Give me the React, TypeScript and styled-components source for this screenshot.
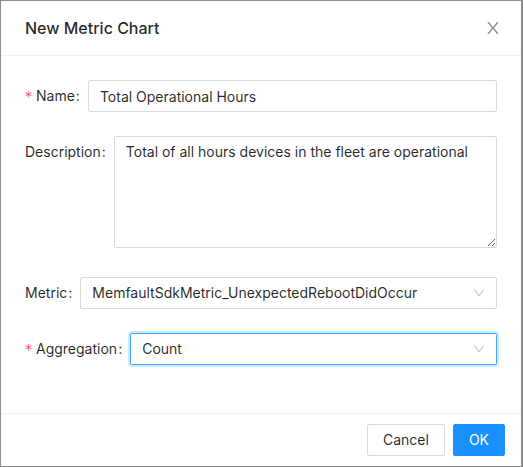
import React from 'react';
import styled, { createGlobalStyle } from 'styled-components';

const GlobalStyle = createGlobalStyle`
  html, body {
    margin: 0;
    padding: 0;
    background: #8c8c8c;
    font-family: Inter, "Noto Sans", "Liberation Sans", sans-serif;
    font-size: 14px;
    color: rgba(0, 0, 0, 0.85);
  }
  * { box-sizing: border-box; }
`;

const Modal = styled.div`
  width: 520px;
  margin: 1px 0 0 1px;
  background: #fff;
  display: flex;
  flex-direction: column;
`;

const Header = styled.div`
  display: flex;
  align-items: center;
  justify-content: space-between;
  padding: 16px 20px 16px 24px;
  border-bottom: 1px solid #f0f0f0;
`;

const Title = styled.div`
  font-size: 16px;
  line-height: 22px;
  font-weight: 500;
  color: rgba(0, 0, 0, 0.85);
`;

const CloseButton = styled.button`
  border: 0;
  background: none;
  padding: 0;
  width: 16px;
  height: 16px;
  display: flex;
  color: rgba(0, 0, 0, 0.45);
  cursor: pointer;
`;

const Body = styled.div`
  padding: 24px;
  display: flex;
  flex-direction: column;
`;

const Row = styled.div<{ $gap?: number }>`
  display: flex;
  align-items: flex-start;
  margin-bottom: ${(p) => p.$gap ?? 24}px;
`;

const Label = styled.label<{ $required?: boolean }>`
  display: flex;
  align-items: center;
  height: 32px;
  line-height: 32px;
  white-space: nowrap;
  color: rgba(0, 0, 0, 0.85);

  &::before {
    content: ${(p) => (p.$required ? '"*"' : 'none')};
    color: #ff4d4f;
    margin-right: 4px;
    font-family: "DejaVu Sans", sans-serif;
    font-size: 14px;
  }

  &::after {
    content: ':';
    margin: 0 8px 0 1px;
  }
`;

const Input = styled.input`
  flex: 1;
  height: 32px;
  padding: 4px 11px;
  border: 1px solid #d9d9d9;
  border-radius: 2px;
  font: inherit;
  color: rgba(0, 0, 0, 0.85);
  outline: none;
`;

const TextArea = styled.textarea`
  flex: 1;
  height: 112px;
  padding: 4px 11px;
  border: 1px solid #d9d9d9;
  border-radius: 2px;
  font: inherit;
  line-height: 22px;
  color: rgba(0, 0, 0, 0.85);
  outline: none;
  resize: vertical;
`;

const Select = styled.div<{ $focused?: boolean }>`
  flex: 1;
  height: 32px;
  padding: 0 11px;
  display: flex;
  align-items: center;
  justify-content: space-between;
  border: 1px solid ${(p) => (p.$focused ? '#40a9ff' : '#d9d9d9')};
  border-radius: 2px;
  box-shadow: ${(p) => (p.$focused ? '0 0 0 2px rgba(24, 144, 255, 0.2)' : 'none')};
  line-height: 30px;
`;

const Arrow = styled.span`
  display: flex;
  width: 12px;
  height: 12px;
  color: rgba(0, 0, 0, 0.25);
`;

const Footer = styled.div`
  display: flex;
  justify-content: flex-end;
  gap: 8px;
  padding: 10px 16px;
  border-top: 1px solid #f0f0f0;
`;

const Button = styled.button<{ $primary?: boolean }>`
  height: 32px;
  padding: 4px 15px;
  font: inherit;
  line-height: 22px;
  border-radius: 2px;
  border: 1px solid ${(p) => (p.$primary ? '#1890ff' : '#d9d9d9')};
  background: ${(p) => (p.$primary ? '#1890ff' : '#fff')};
  color: ${(p) => (p.$primary ? '#fff' : 'rgba(0, 0, 0, 0.85)')};
  cursor: pointer;
`;

const ChevronDown = () => (
  <svg viewBox="64 64 896 896" width="12" height="12" fill="currentColor">
    <path d="M884 256h-75c-5.1 0-9.9 2.5-12.9 6.5L512 654.2 227.9 262.5c-3-4.1-7.8-6.5-12.9-6.5h-75c-6.5 0-10.3 7.4-6.5 12.7l352.6 486.1c12.8 17.6 39 17.6 51.7 0l352.6-486.1c3.9-5.3.1-12.7-6.4-12.7z" />
  </svg>
);

const CloseIcon = () => (
  <svg viewBox="64 64 896 896" width="16" height="16" fill="currentColor">
    <path d="M563.8 512l262.5-312.9c4.4-5.2.7-13.1-6.1-13.1h-79.8c-4.7 0-9.2 2.1-12.3 5.7L511.6 449.8 295.1 191.7c-3-3.6-7.5-5.7-12.3-5.7H203c-6.8 0-10.5 7.9-6.1 13.1L459.4 512 196.9 824.9A7.950 7.950 0 00203 838h79.8c4.7 0 9.2-2.1 12.3-5.700l216.5-258.1 216.5 258.1c3 3.6 7.5 5.7 12.3 5.7h79.8c6.8 0 10.5-7.9 6.1-13.1L563.8 512z" />
  </svg>
);

export default function App() {
  return (
    <>
      <GlobalStyle />
      <Modal>
        <Header>
          <Title>New Metric Chart</Title>
          <CloseButton aria-label="Close">
            <CloseIcon />
          </CloseButton>
        </Header>
        <Body>
          <Row>
            <Label $required>Name</Label>
            <Input defaultValue="Total Operational Hours" />
          </Row>
          <Row $gap={29}>
            <Label>Description</Label>
            <TextArea defaultValue="Total of all hours devices in the fleet are operational" />
          </Row>
          <Row>
            <Label>Metric</Label>
            <Select>
              <span>MemfaultSdkMetric_UnexpectedRebootDidOccur</span>
              <Arrow>
                <ChevronDown />
              </Arrow>
            </Select>
          </Row>
          <Row>
            <Label $required>Aggregation</Label>
            <Select $focused>
              <span>Count</span>
              <Arrow>
                <ChevronDown />
              </Arrow>
            </Select>
          </Row>
        </Body>
        <Footer>
          <Button>Cancel</Button>
          <Button $primary>OK</Button>
        </Footer>
      </Modal>
    </>
  );
}
